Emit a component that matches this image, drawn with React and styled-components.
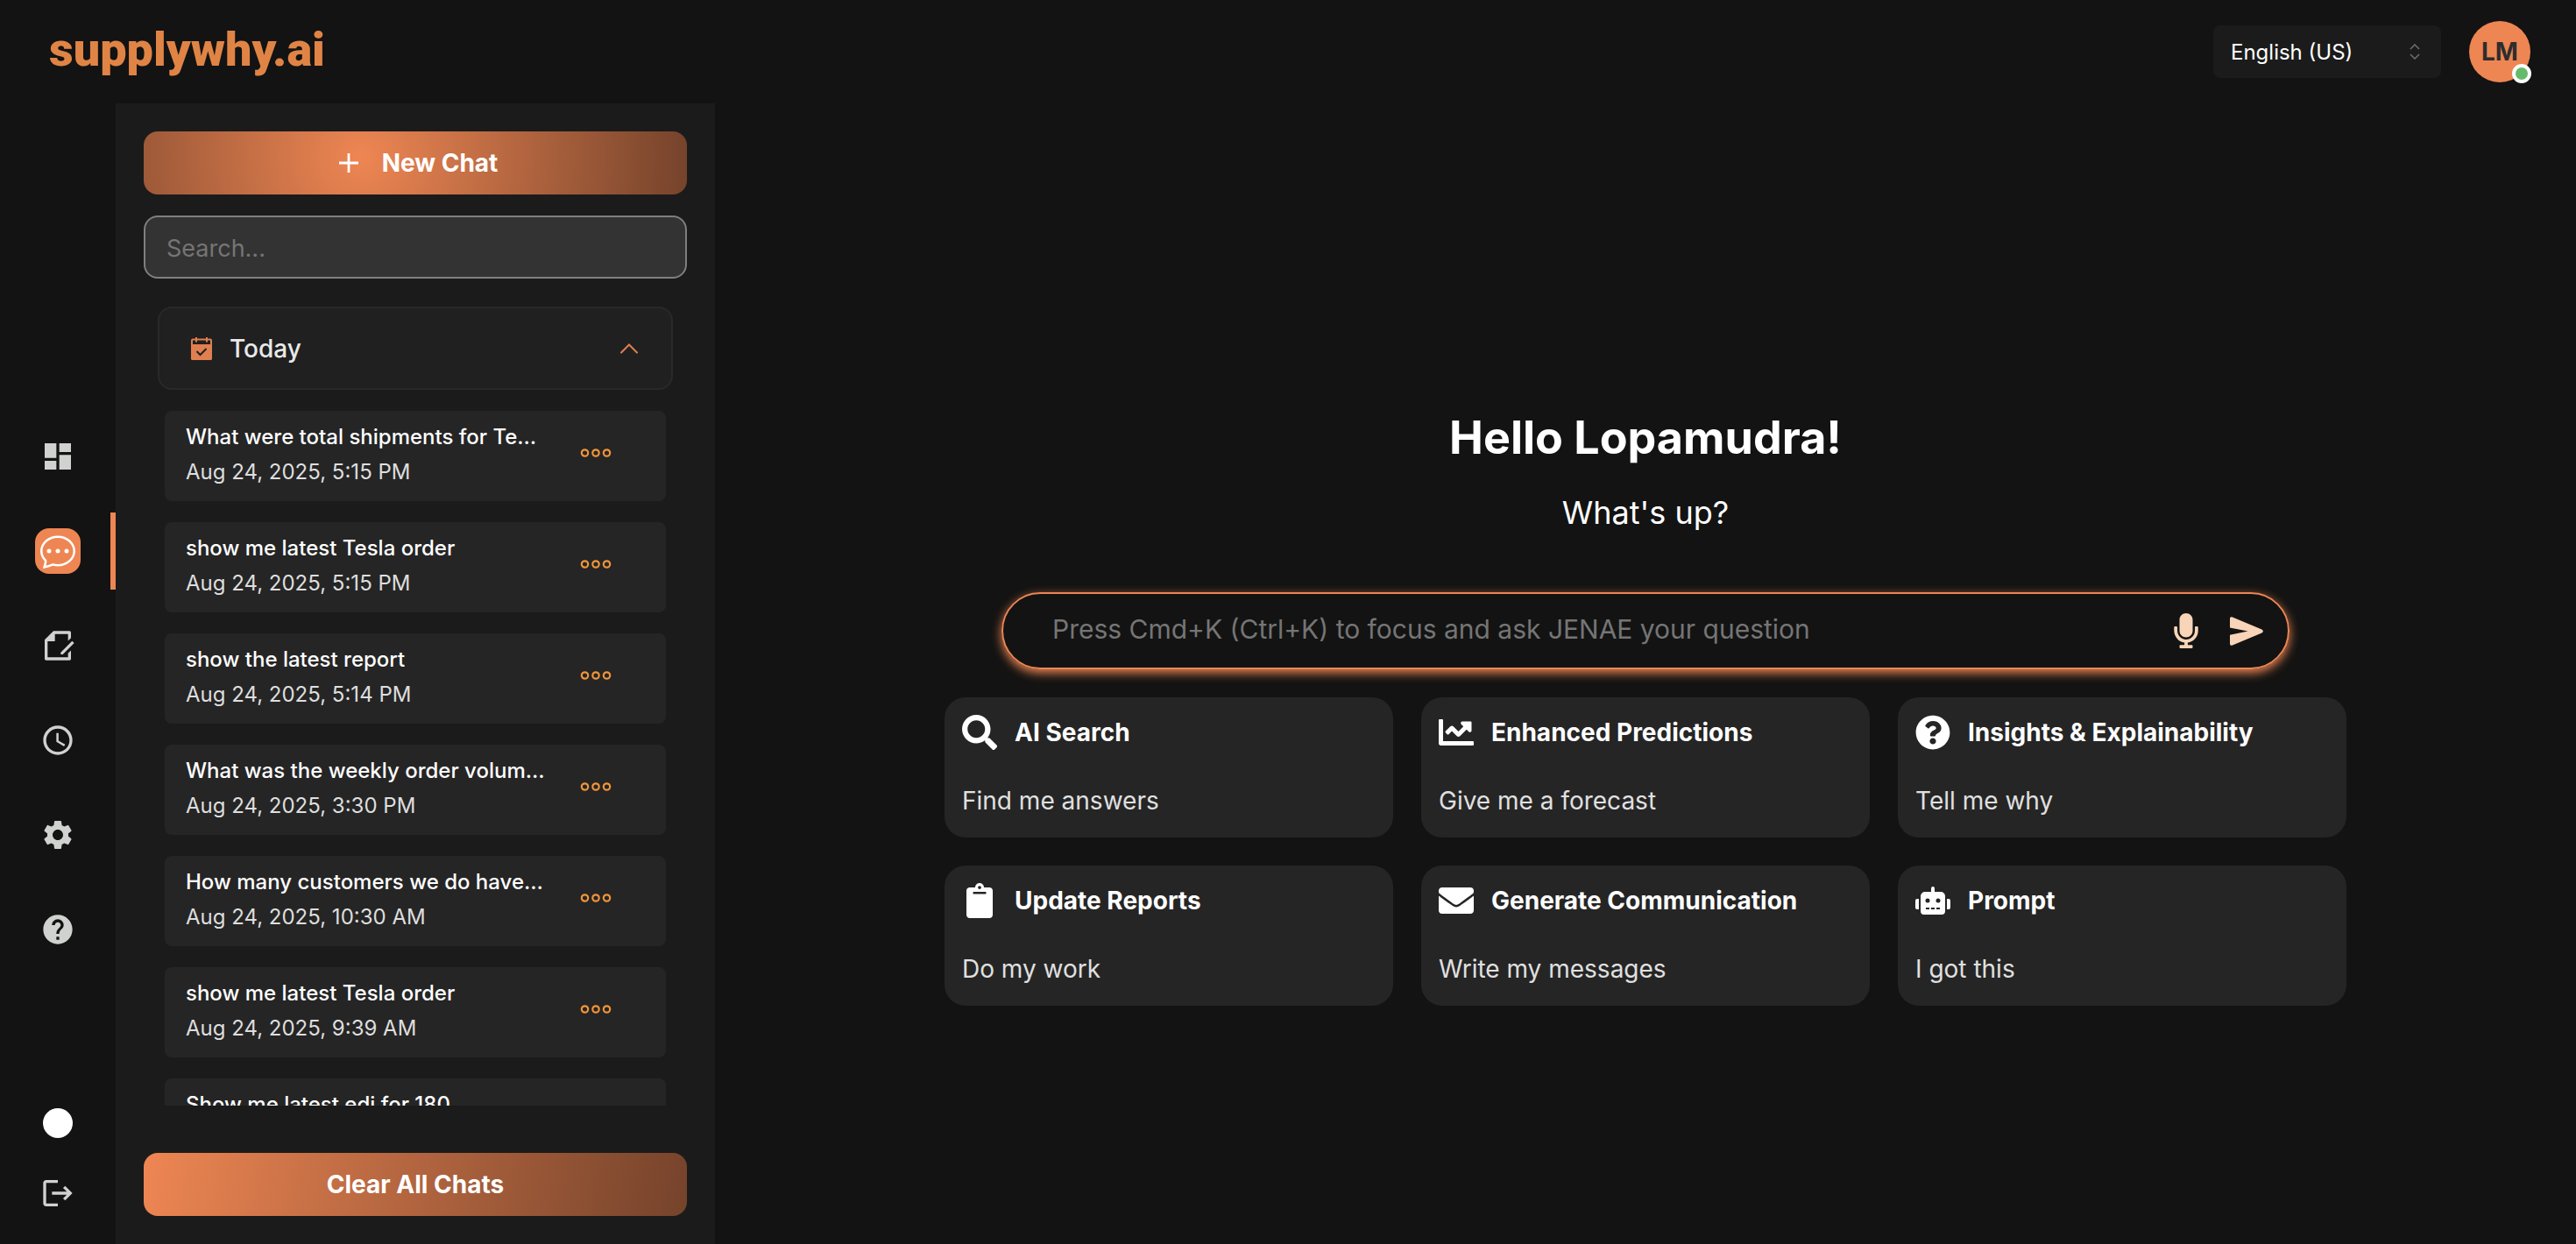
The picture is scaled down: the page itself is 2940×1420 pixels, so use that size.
import React from "react";
import styled, { createGlobalStyle } from "styled-components";
import { MdDashboard, MdAccessTime, MdSettings, MdHelp } from "react-icons/md";
import { RiFileEditLine } from "react-icons/ri";
import { BsChatDots } from "react-icons/bs";
import {
  FaMicrophone, FaSearch, FaChartLine, FaQuestionCircle, FaClipboard, FaEnvelope, FaRobot,
} from "react-icons/fa";

const GlobalStyle = createGlobalStyle`
  *, *::before, *::after { box-sizing: border-box; }
  body {
    margin: 0;
    background: #131313;
    color: #fff;
    font-family: Inter, "Liberation Sans", sans-serif;
  }
  button, input, select { font: inherit; color: inherit; }
  button { border: 0; background: none; padding: 0; cursor: pointer; }
  h1, h2, p, ul { margin: 0; padding: 0; }
  ul { list-style: none; }
  svg { display: block; flex: none; }
`;

const Page = styled.div`
  display: flex;
  flex-direction: column;
  height: 100vh;
  overflow: hidden;
`;

const TopBar = styled.header`
  display: flex;
  align-items: center;
  justify-content: space-between;
  height: 118px;
  flex: none;
  padding: 0 52px 0 56px;
`;

const Account = styled.div`
  display: flex;
  align-items: center;
  gap: 32px;
`;

const LanguageBox = styled.label`
  display: flex;
  align-items: center;
  width: 260px;
  height: 60px;
  padding: 0 24px 0 20px;
  border-radius: 8px;
  background: #1b1b1b;
  color: #6b6b6b;
`;

const LanguageSelect = styled.select`
  flex: 1;
  min-width: 0;
  appearance: none;
  border: 0;
  padding: 0;
  background: #1b1b1b;
  color: #fff;
  font-size: 24px;
`;

const Avatar = styled.button`
  position: relative;
  width: 70px;
  height: 70px;
  border-radius: 50%;
  background: #ee8653;
  color: #2d2d2d;
  font-size: 28px;
  font-weight: 700;
`;

const OnlineDot = styled.span`
  position: absolute;
  right: -1px;
  bottom: -1px;
  width: 22px;
  height: 22px;
  border: 4px solid #fff;
  border-radius: 50%;
  background: #66bb6a;
`;

const Body = styled.div`
  display: flex;
  flex: 1;
  min-height: 0;
`;

const Rail = styled.nav`
  display: flex;
  flex-direction: column;
  width: 132px;
  flex: none;
  padding-bottom: 18px;
`;

const RailGroup = styled.div`
  display: flex;
  flex-direction: column;
  gap: 20px;
  margin: auto 0;
  padding-top: 222px;
`;

const RailItem = styled.button`
  display: flex;
  align-items: center;
  justify-content: center;
  width: 100%;
  height: 88px;
  color: #d0d2d0;
  font-size: 40px;
  padding-left: ${(p) => (p.$active ? "6px" : "0")};
  border-right: ${(p) => (p.$active ? "6px solid #ee8653" : "0")};
  border-radius: 4px 0 0 4px;
`;

const ActiveTile = styled.span`
  display: flex;
  align-items: center;
  justify-content: center;
  width: 52px;
  height: 52px;
  border-radius: 16px;
  background: #ee8653;
  color: #fff;
`;

const RailFooter = styled.div`
  display: flex;
  flex-direction: column;
  align-items: center;
`;

const FooterButton = styled.button`
  display: flex;
  align-items: center;
  justify-content: center;
  width: 80px;
  height: 80px;
  color: #d0d2d0;
`;

const ThemeDisc = styled.span`
  width: 34px;
  height: 34px;
  border-radius: 50%;
  background: #fff;
`;

const ChatPanel = styled.aside`
  display: flex;
  flex-direction: column;
  width: 684px;
  flex: none;
  padding: 32px;
  background: #1b1b1b;
`;

const PanelButton = styled.button`
  display: flex;
  align-items: center;
  justify-content: center;
  gap: 26px;
  width: 100%;
  height: 72px;
  flex: none;
  border-radius: 16px;
  background: ${(p) => p.$fill};
  color: #fff;
  font-size: 28px;
  font-weight: 700;
`;

const SearchInput = styled.input`
  height: 72px;
  flex: none;
  margin: 24px 0 32px;
  padding: 2px 24px 0;
  border: 2px solid #7f7f7f;
  border-radius: 16px;
  background: #333;
  font-size: 27px;
  outline: 0;
  &::placeholder { color: #757575; opacity: 1; }
`;

const History = styled.div`
  flex: 1;
  min-height: 0;
  overflow: hidden;
  margin-bottom: 54px;
  padding: 0 16px;
`;

const GroupHeader = styled.button`
  display: flex;
  align-items: center;
  gap: 20px;
  width: 100%;
  height: 95px;
  padding: 0 38px 0 36px;
  border: 2px solid #292929;
  border-radius: 16px;
  background: #202020;
  color: #e9e9e9;
  font-size: 28px;
  font-weight: 500;
  text-align: left;
  svg { color: #e07f50; }
`;

const GroupTitle = styled.span`
  flex: 1;
`;

const ChatList = styled.ul`
  display: flex;
  flex-direction: column;
  gap: 24px;
  padding: 24px 8px;
`;

const ChatRow = styled.li`
  display: flex;
  align-items: center;
  justify-content: space-between;
  padding: 10px 62px 14px 24px;
  border-radius: 8px;
  background: #252525;
`;

const ChatText = styled.div`
  width: 410px;
`;

const ChatTitle = styled.h2`
  font-size: 24px;
  line-height: 40px;
  font-weight: 500;
  white-space: nowrap;
  overflow: hidden;
  text-overflow: ellipsis;
`;

const ChatDate = styled.p`
  font-size: 24px;
  line-height: 39px;
  color: #dedede;
`;

const MoreButton = styled.button`
  padding-bottom: 4px;
  color: #f0953a;
`;

const Main = styled.main`
  display: flex;
  flex: 1;
  flex-direction: column;
  align-items: center;
  justify-content: center;
  min-width: 0;
  padding: 72px 0 0;
`;

const Greeting = styled.h1`
  font-size: 52px;
  line-height: 76px;
  font-weight: 700;
`;

const Subtitle = styled.p`
  margin: 20px 0 64px;
  font-size: 36px;
  line-height: 54px;
`;

const AskBar = styled.form`
  display: flex;
  align-items: center;
  width: 1470px;
  max-width: 92%;
  height: 88px;
  margin-bottom: 32px;
  padding: 0 28px 0 56px;
  border: 2px solid #ee8653;
  border-radius: 44px;
  box-shadow: 0 4px 12px #ee8653;
  color: #f8d5b8;
`;

const AskInput = styled.input`
  flex: 1;
  min-width: 0;
  border: 0;
  padding: 0 0 4px;
  background: transparent;
  color: #fff;
  font-size: 30px;
  outline: 0;
  &::placeholder { color: #757575; opacity: 1; }
`;

const AskActions = styled.div`
  display: flex;
  align-items: center;
  gap: 30px;
`;

const CardGrid = styled.div`
  display: grid;
  grid-template-columns: repeat(3, 1fr);
  gap: 32px;
  width: 1600px;
  max-width: 96%;
`;

const Card = styled.button`
  display: flex;
  flex-direction: column;
  gap: 36px;
  height: 160px;
  padding: 20px;
  border-radius: 24px;
  background: #252525;
  text-align: left;
`;

const CardHead = styled.span`
  display: flex;
  align-items: center;
  gap: 20px;
  font-size: 28px;
  line-height: 40px;
  font-weight: 700;
  svg { font-size: 40px; }
`;

const CardText = styled.span`
  font-size: 28px;
  line-height: 44px;
  color: #e0e0e0;
`;

const LogoText = styled.text`
  font-family: Roboto, Inter, sans-serif;
  font-size: 54px;
  font-weight: 900;
  fill: #e08446;
`;

const Logo = () => (
  <svg width="340" height="68" viewBox="0 0 340 68" role="img" aria-label="supplywhy.ai">
    <LogoText x="0" y="50">supplywhy.ai</LogoText>
  </svg>
);

const UpDownIcon = () => (
  <svg width="12" height="18" viewBox="0 0 12 18" fill="none" stroke="currentColor" strokeWidth="1.6">
    <path d="M1 6l5-5 5 5M1 12l5 5 5-5" />
  </svg>
);

const PlusIcon = () => (
  <svg width="30" height="24" viewBox="-6 0 30 24" stroke="currentColor" strokeWidth="2.8">
    <path d="M12 1v22M1 12h22" />
  </svg>
);

const CalendarIcon = () => (
  <svg width="24" height="26" viewBox="0 0 24 26" fill="none" stroke="currentColor">
    <rect x="1" y="2.5" width="22" height="22.5" rx="1" strokeWidth="2" />
    <path d="M0 8h24v16a2 2 0 0 1-2 2H2a2 2 0 0 1-2-2z" fill="currentColor" stroke="none" />
    <path d="M6 0v5.5M18 0v5.5" strokeWidth="2" />
    <path d="M6.5 16l4 4 7-7" stroke="#202020" strokeWidth="2" />
  </svg>
);

const ChevronUpIcon = () => (
  <svg width="20" height="12" viewBox="0 0 20 12" fill="none" stroke="currentColor" strokeWidth="2" strokeLinecap="round">
    <path d="M1 10.5l9-9 9 9" />
  </svg>
);

const DotsIcon = () => (
  <svg width="36" height="12" viewBox="0 0 36 12" fill="none" stroke="currentColor" strokeWidth="2.2">
    <circle cx="5.5" cy="6" r="3.7" />
    <circle cx="18" cy="6" r="3.7" />
    <circle cx="30.5" cy="6" r="3.7" />
  </svg>
);

const LogoutIcon = () => (
  <svg width="40" height="40" viewBox="0 0 24 24" fill="currentColor">
    <path d="M17 7l-1.41 1.41L18.17 11H8v2h10.17l-2.58 2.58L17 17l5-5zM4 5h8V3H4c-1.1 0-2 .9-2 2v14c0 1.1.9 2 2 2h8v-2H4V5z" />
  </svg>
);

const SendIcon = () => (
  <svg width="38" height="33" viewBox="0 0 38 33" fill="currentColor">
    <path d="M0 2Q0-.3 2.4.3L36.4 14.6Q39.4 16.5 36.4 18.4L2.4 32.7Q0 33.3 0 31V20.7L20.5 16.5L0 12.5Z" />
  </svg>
);

const chats = [
  ["What were total shipments for Tesla", "Aug 24, 2025, 5:15 PM"],
  ["show me latest Tesla order", "Aug 24, 2025, 5:15 PM"],
  ["show the latest report", "Aug 24, 2025, 5:14 PM"],
  ["What was the weekly order volume for", "Aug 24, 2025, 3:30 PM"],
  ["How many customers we do have in", "Aug 24, 2025, 10:30 AM"],
  ["show me latest Tesla order", "Aug 24, 2025, 9:39 AM"],
  ["Show me latest edi for 180", "Aug 24, 2025, 9:30 AM"],
];

const cards = [
  [FaSearch, "AI Search", "Find me answers"],
  [FaChartLine, "Enhanced Predictions", "Give me a forecast"],
  [FaQuestionCircle, "Insights & Explainability", "Tell me why"],
  [FaClipboard, "Update Reports", "Do my work"],
  [FaEnvelope, "Generate Communication", "Write my messages"],
  [FaRobot, "Prompt", "I got this"],
];

const newChatFill = "radial-gradient(circle at 40% 40%, #ee8653 0%, #75432b 100%)";
const clearFill = "linear-gradient(100deg, #ee8653 0%, #75432b 100%)";

export default function App() {
  return (
    <>
      <GlobalStyle />
      <Page>
        <TopBar>
          <Logo />
          <Account>
            <LanguageBox>
              <LanguageSelect aria-label="Language" defaultValue="en-US">
                <option value="en-US">English (US)</option>
              </LanguageSelect>
              <UpDownIcon />
            </LanguageBox>
            <Avatar>LM<OnlineDot /></Avatar>
          </Account>
        </TopBar>
        <Body>
          <Rail>
            <RailGroup>
              <RailItem aria-label="Dashboard"><MdDashboard /></RailItem>
              <RailItem aria-label="Chat" $active><ActiveTile><BsChatDots /></ActiveTile></RailItem>
              <RailItem aria-label="Reports"><RiFileEditLine /></RailItem>
              <RailItem aria-label="History"><MdAccessTime /></RailItem>
              <RailItem aria-label="Settings"><MdSettings /></RailItem>
              <RailItem aria-label="Help"><MdHelp /></RailItem>
            </RailGroup>
            <RailFooter>
              <FooterButton aria-label="Theme"><ThemeDisc /></FooterButton>
              <FooterButton aria-label="Log out"><LogoutIcon /></FooterButton>
            </RailFooter>
          </Rail>
          <ChatPanel>
            <PanelButton $fill={newChatFill}><PlusIcon />New Chat</PanelButton>
            <SearchInput type="text" placeholder="Search..." aria-label="Search chats" />
            <History>
              <GroupHeader aria-expanded="true">
                <CalendarIcon />
                <GroupTitle>Today</GroupTitle>
                <ChevronUpIcon />
              </GroupHeader>
              <ChatList>
                {chats.map(([title, date], i) => (
                  <ChatRow key={i}>
                    <ChatText>
                      <ChatTitle>{title}</ChatTitle>
                      <ChatDate>{date}</ChatDate>
                    </ChatText>
                    <MoreButton aria-label="More options"><DotsIcon /></MoreButton>
                  </ChatRow>
                ))}
              </ChatList>
            </History>
            <PanelButton $fill={clearFill}>Clear All Chats</PanelButton>
          </ChatPanel>
          <Main>
            <Greeting>Hello Lopamudra!</Greeting>
            <Subtitle>What's up?</Subtitle>
            <AskBar onSubmit={(e) => e.preventDefault()}>
              <AskInput
                type="text"
                aria-label="Ask a question"
                placeholder="Press Cmd+K (Ctrl+K) to focus and ask JENAE your question"
              />
              <AskActions>
                <button type="button" aria-label="Voice input"><FaMicrophone size={40} /></button>
                <button type="submit" aria-label="Send"><SendIcon /></button>
              </AskActions>
            </AskBar>
            <CardGrid>
              {cards.map(([Icon, title, text]) => (
                <Card key={title}>
                  <CardHead><Icon />{title}</CardHead>
                  <CardText>{text}</CardText>
                </Card>
              ))}
            </CardGrid>
          </Main>
        </Body>
      </Page>
    </>
  );
}
